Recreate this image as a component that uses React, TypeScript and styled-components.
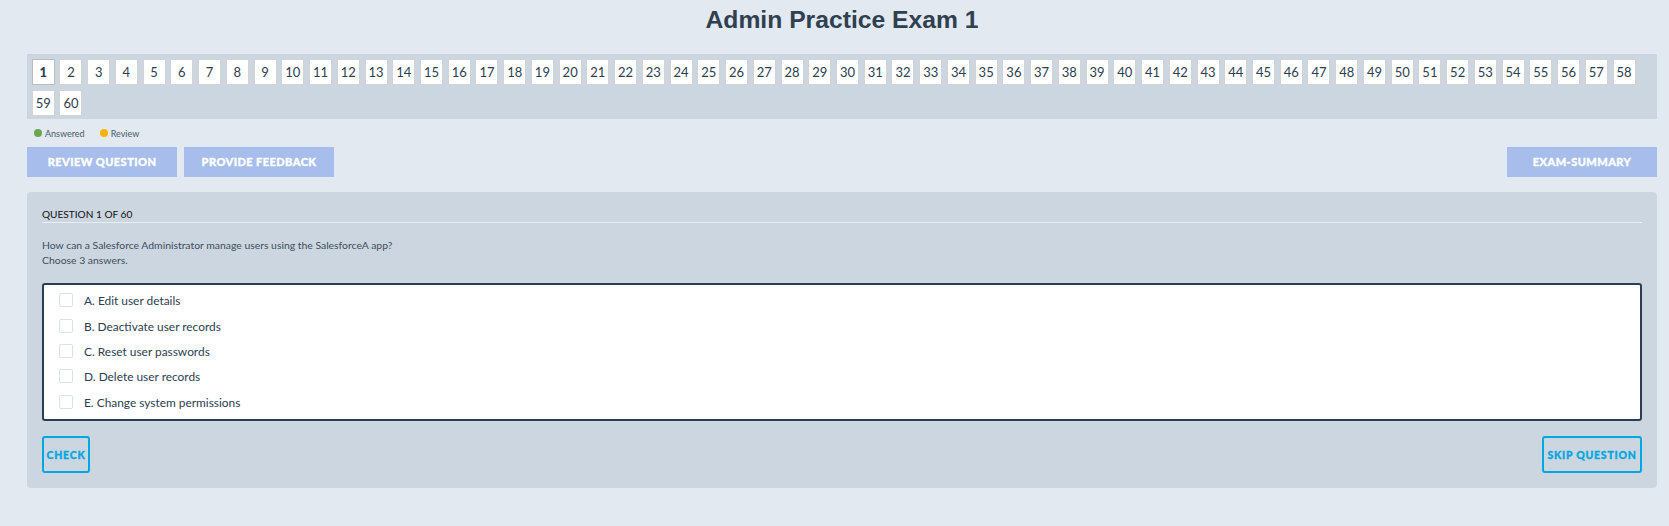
import React from 'react'
import styled, { createGlobalStyle } from 'styled-components'

const GlobalStyle = createGlobalStyle`
  html, body {
    margin: 0;
    padding: 0;
    background: #e2e9f1;
    font-family: Lato, "Liberation Sans", sans-serif;
    color: #2c3e50;
  }
`

const Page = styled.div`
  padding: 0 12px 38px 27px;
`

const Title = styled.h1`
  margin: 0;
  height: 54px;
  padding-top: 4px;
  box-sizing: border-box;
  font-family: "Liberation Sans", Arial, sans-serif;
  font-size: 24.7px;
  line-height: 32px;
  font-weight: 700;
  text-align: center;
  color: #2f4050;
`

const NumberBar = styled.div`
  display: flex;
  flex-wrap: wrap;
  align-content: flex-start;
  gap: 5px 4.74px;
  height: 65px;
  box-sizing: border-box;
  padding: 5px 4.7px;
  background: #ccd6e0;
`

const NumberTile = styled.div<{ $active?: boolean }>`
  width: 23px;
  height: 26px;
  box-sizing: border-box;
  display: flex;
  align-items: center;
  justify-content: center;
  background: #fff;
  border: 1px solid ${p => (p.$active ? '#bcbcbc' : '#d3d3d3')};
  font-size: 13px;
  font-weight: ${p => (p.$active ? 900 : 400)};
  color: #2c3e50;
`

const Legend = styled.div`
  display: flex;
  align-items: center;
  height: 28px;
  padding-left: 7px;
  font-size: 9px;
  color: #4a5a6a;
`

const LegendItem = styled.div`
  display: flex;
  align-items: center;
  gap: 3px;
  margin-right: 15px;
`

const Dot = styled.span<{ $color: string }>`
  width: 8px;
  height: 8px;
  border-radius: 50%;
  background: ${p => p.$color};
`

const Toolbar = styled.div`
  display: flex;
  gap: 7px;
  margin-bottom: 15px;
`

const ActionButton = styled.button<{ $right?: boolean }>`
  width: 150px;
  height: 30px;
  padding: 0 0 1px;
  border: 0;
  margin-left: ${p => (p.$right ? 'auto' : '0')};
  background: #a7bdeb;
  color: #fff;
  font-family: Lato, sans-serif;
  font-size: 11px;
  font-weight: 900;
  letter-spacing: 0.45px;
  -webkit-text-stroke: 0.35px #fff;
`

const Panel = styled.div`
  height: 296px;
  box-sizing: border-box;
  padding: 15px;
  background: #ccd6e0;
  border-radius: 4px;
`

const QuestionHead = styled.div`
  height: 15px;
  border-bottom: 1px solid #e8edf3;
  font-size: 10.1px;
  line-height: 14px;
  color: #111;
`

const QuestionText = styled.div`
  margin-top: 15px;
  font-size: 10.4px;
  line-height: 15px;
  color: #3d4c5c;
`

const Options = styled.div`
  margin-top: 15px;
  height: 138px;
  box-sizing: border-box;
  padding: 3px 0 0 15px;
  background: #fff;
  border: 2px solid #2c3e50;
  border-radius: 3px;
`

const OptionRow = styled.label`
  display: flex;
  align-items: center;
  height: 25.4px;
  font-size: 11.9px;
  color: #2c3e50;
`

const Check = styled.span`
  width: 14px;
  height: 14px;
  box-sizing: border-box;
  margin: -1px 11px 0 0;
  background: #fff;
  border: 1.5px solid #d8e0ea;
  border-radius: 2px;
`

const Footer = styled.div`
  display: flex;
  justify-content: space-between;
  margin-top: 15px;
`

const OutlineButton = styled.button<{ $wide?: boolean }>`
  width: ${p => (p.$wide ? '100px' : '48px')};
  height: 37px;
  padding: 0;
  background: transparent;
  border: 2px solid #00a8e0;
  border-radius: 3px;
  color: #00a8e0;
  font-family: Lato, sans-serif;
  font-size: 10.5px;
  font-weight: 900;
  letter-spacing: 0.75px;
  -webkit-text-stroke: 0.3px #00a8e0;
`

const options = [
  'A. Edit user details',
  'B. Deactivate user records',
  'C. Reset user passwords',
  'D. Delete user records',
  'E. Change system permissions',
]

const numbers = Array.from({ length: 60 }, (_, i) => i + 1)

export default function App() {
  return (
    <Page>
      <GlobalStyle />
      <Title>Admin Practice Exam 1</Title>
      <NumberBar>
        {numbers.map(n => (
          <NumberTile key={n} $active={n === 1}>
            {n}
          </NumberTile>
        ))}
      </NumberBar>
      <Legend>
        <LegendItem>
          <Dot $color="#6aa84f" />
          Answered
        </LegendItem>
        <LegendItem>
          <Dot $color="#ffb300" />
          Review
        </LegendItem>
      </Legend>
      <Toolbar>
        <ActionButton>REVIEW QUESTION</ActionButton>
        <ActionButton>PROVIDE FEEDBACK</ActionButton>
        <ActionButton $right>EXAM-SUMMARY</ActionButton>
      </Toolbar>
      <Panel>
        <QuestionHead>QUESTION 1 OF 60</QuestionHead>
        <QuestionText>
          How can a Salesforce Administrator manage users using the SalesforceA app?
          <br />
          Choose 3 answers.
        </QuestionText>
        <Options>
          {options.map(o => (
            <OptionRow key={o}>
              <Check />
              {o}
            </OptionRow>
          ))}
        </Options>
        <Footer>
          <OutlineButton>CHECK</OutlineButton>
          <OutlineButton $wide>SKIP QUESTION</OutlineButton>
        </Footer>
      </Panel>
    </Page>
  )
}
